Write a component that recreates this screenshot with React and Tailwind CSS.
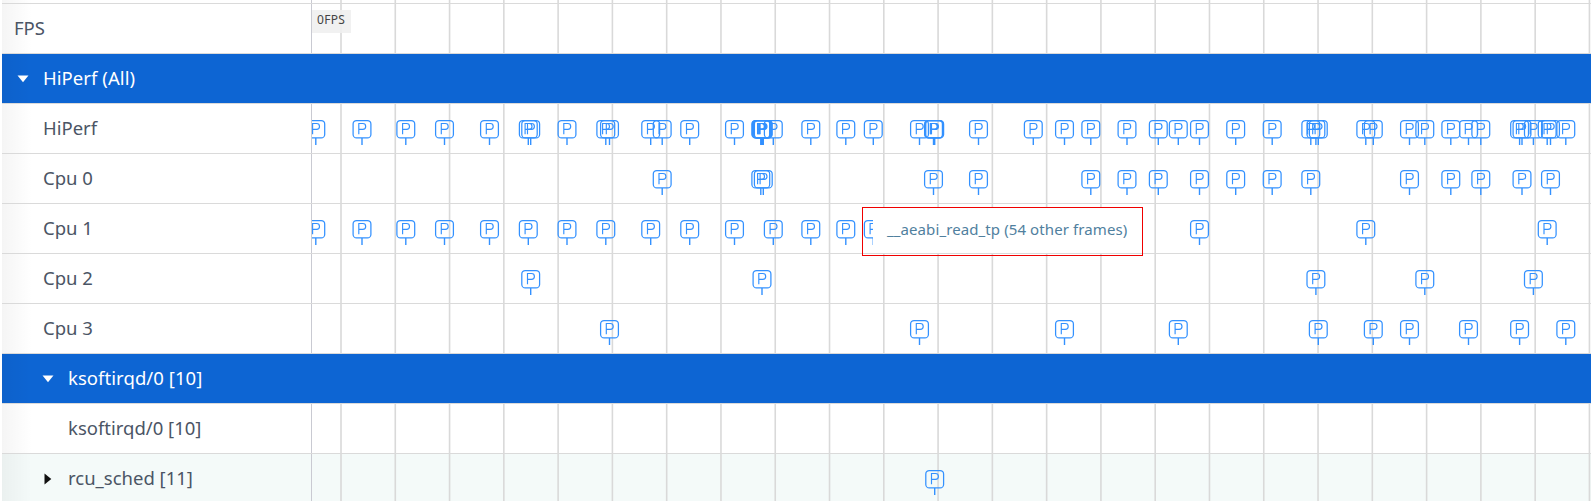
const CPU0 = [662.2, 760.8, 763.3, 933.5, 978.5, 1090.8, 1127, 1158.3, 1199.5, 1235.7, 1272.2, 1310.8, 1409.5, 1450.8, 1480.8, 1522, 1550.5];
const CPU1 = [315.8, 362, 405.8, 444.5, 489.5, 528.3, 567, 605.8, 650.7, 689.7, 734.5, 773.3, 810.8, 845.8, 873.3, 1199.5, 1365.8, 1547.2];
const CPU2 = [530.7, 762, 1315.9, 1424.8, 1533.4];
const CPU3 = [609.5, 919.5, 1064.5, 1178.3, 1318.3, 1373.3, 1409.5, 1468.5, 1519.6, 1565.8];
const RCU = [934.7];
const ALL = [...new Set([...CPU0, ...CPU1, ...CPU2, ...CPU3, ...RCU, 761.3, 762.6, 934.1, 1033.3])].sort((a, b) => a - b);
const GRID = Array.from({ length: 24 }, (_, i) => 341 + i * 54.28);
const ORIGIN = 312;

function Track({ marks = [] }) {
  return (
    <svg className="block h-full w-full" aria-hidden="true">
      <g stroke="#d9d9d9" strokeWidth="1.6">
        {GRID.map((x) => (
          <line key={x} x1={x - ORIGIN} x2={x - ORIGIN} y1="0" y2="50" />
        ))}
      </g>
      <g fill="none" stroke="#3391ff">
        {marks.map((x, i) => (
          <g key={i} transform={`translate(${x - ORIGIN} 16)`}>
            <rect x="-8.9" y="0.5" width="17.8" height="17.4" rx="3.5" strokeWidth="1.25" />
            <path d="M-3.2 14.2V3.5H0.8A2.9 2.9 0 0 1 0.8 9.3H-3.2" strokeWidth="1.15" />
            <path d="M0 18V25" strokeWidth="1.4" />
          </g>
        ))}
      </g>
    </svg>
  );
}

function Arrow({ open, color }) {
  return (
    <svg className="h-3 w-3 shrink-0" viewBox="0 0 12 12" fill={color} aria-hidden="true">
      <path d={open ? "M0.5 2.5H11.5L6 9.3Z" : "M2.5 0.5V11.5L9.3 6Z"} />
    </svg>
  );
}

function Row({ label, indent, arrow, group, tint, marks, children }) {
  return (
    <div className={`flex h-[50px] shrink-0 border-b border-[#dadada] ${group ? "bg-[#0d65d3] text-white" : tint ? "bg-[#f4faf9] text-[#4b5565]" : "bg-white text-[#4b5565]"}`}>
      <div className={`flex w-[310px] shrink-0 items-center ${group ? "" : "border-r border-[#c9cad2]"} bg-linear-to-r from-black/[0.04] to-transparent to-[30px] ${indent}`}>
        {arrow && (
          <span className="flex w-[26px] shrink-0">
            <Arrow open={arrow === "open"} color={group ? "#ffffff" : "#111111"} />
          </span>
        )}
        <span className={`whitespace-nowrap text-[18.5px] leading-none ${group ? "tracking-[0.06px]" : ""}`}>{label}</span>
      </div>
      <div className="relative min-w-0 flex-1 overflow-hidden">
        {!group && <Track marks={marks} />}
        {children}
      </div>
    </div>
  );
}

export default function App() {
  return (
    <main className="relative flex h-[501px] w-[1591px] flex-col overflow-hidden bg-white pl-[2px] font-['Noto_Sans','Open_Sans',sans-serif]">
      <div className="flex h-1 shrink-0 border-b border-[#dadada]">
        <div className="w-[310px] shrink-0 border-r border-[#c9cad2] bg-linear-to-r from-black/[0.04] to-transparent to-[30px]" />
        <div className="min-w-0 flex-1"><Track /></div>
      </div>
      <Row label="FPS" indent="pl-[12px]">
        <span className="absolute left-0 top-[6px] flex h-[23px] w-[39px] items-start bg-[#f0f0f0]/90 pl-[5px] pt-[2px] text-[12px] leading-[15px] tracking-[0.3px] text-[#444]">0FPS</span>
      </Row>
      <Row label="HiPerf (All)" indent="pl-[15px]" arrow="open" group />
      <Row label="HiPerf" indent="pl-[41px]" marks={ALL} />
      <Row label="Cpu 0" indent="pl-[41px]" marks={CPU0} />
      <Row label="Cpu 1" indent="pl-[41px]" marks={CPU1} />
      <Row label="Cpu 2" indent="pl-[41px]" marks={CPU2} />
      <Row label="Cpu 3" indent="pl-[41px]" marks={CPU3} />
      <Row label="ksoftirqd/0 [10]" indent="pl-[40px]" arrow="open" group />
      <Row label="ksoftirqd/0 [10]" indent="pl-[66px]" />
      <Row label="rcu_sched [11]" indent="pl-[40px]" arrow="closed" tint marks={RCU} />
      <div className="absolute left-[862px] top-[207px] flex h-[49px] w-[281px] items-start border border-[#f00000] pl-[10px]">
        <div className="flex h-[45px] flex-1 items-center bg-white pb-[3px] pl-[14px] text-[15px] leading-none tracking-[0.1px] text-[#50809e]">
          <span className="whitespace-nowrap">__aeabi_read_tp (54 other frames)</span>
        </div>
      </div>
    </main>
  );
}
